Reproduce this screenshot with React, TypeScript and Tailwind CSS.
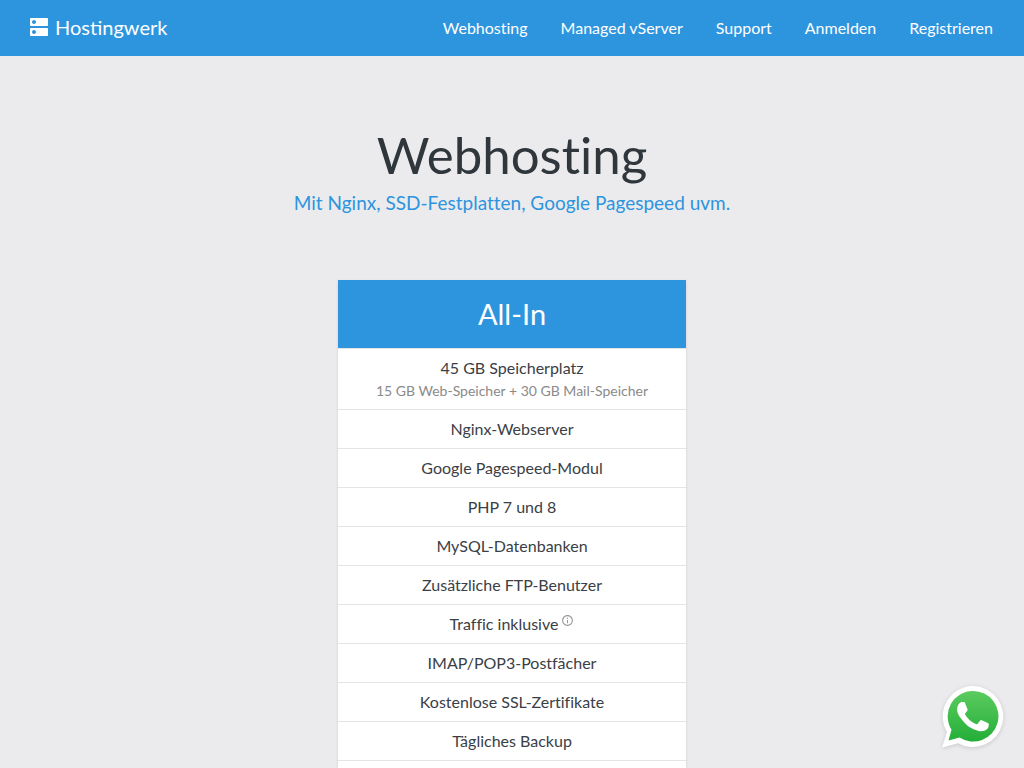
import { MdDns, MdInfoOutline } from "react-icons/md";

type Feature = {
  title: string;
  detail?: string;
  info?: boolean;
};

const navLinks = ["Webhosting", "Managed vServer", "Support", "Anmelden", "Registrieren"];

const features: Feature[] = [
  { title: "45 GB Speicherplatz", detail: "15 GB Web-Speicher + 30 GB Mail-Speicher" },
  { title: "Nginx-Webserver" },
  { title: "Google Pagespeed-Modul" },
  { title: "PHP 7 und 8" },
  { title: "MySQL-Datenbanken" },
  { title: "Zusätzliche FTP-Benutzer" },
  { title: "Traffic inklusive", info: true },
  { title: "IMAP/POP3-Postfächer" },
  { title: "Kostenlose SSL-Zertifikate" },
  { title: "Tägliches Backup" },
];

function Header() {
  return (
    <header className="flex h-14 shrink-0 items-center justify-between bg-[#2d94de] pr-[31px] pl-[27px] text-white">
      <a href="#" className="flex items-center gap-1 pb-[2px] text-xl">
        <MdDns className="size-6" aria-hidden />
        Hostingwerk
      </a>
      <nav className="flex gap-[33px] text-base [font-variant-ligatures:none]">
        {navLinks.map((label) => (
          <a key={label} href="#">
            {label}
          </a>
        ))}
      </nav>
    </header>
  );
}

function PlanCard() {
  return (
    <section className="flex w-full max-w-[348px] flex-1 flex-col bg-white shadow-sm">
      <h2 className="bg-[#2d94de] py-4 text-center text-[29px] leading-9 text-white">All-In</h2>
      <ul className="border-b border-[#e3e4e6] text-center text-base text-[#3a4046]">
        {features.map(({ title, detail, info }) => (
          <li key={title} className="border-t border-[#e3e4e6] py-[7px]">
            <div className="flex justify-center gap-[3px]">
              {title}
              {info && (
                <button type="button" aria-label="Info" className="mt-[2px] self-start text-[13px] text-[#999]">
                  <MdInfoOutline />
                </button>
              )}
            </div>
            {detail && <p className="text-sm leading-[22px] text-[#8a8a8a]">{detail}</p>}
          </li>
        ))}
      </ul>
    </section>
  );
}

function WhatsAppLink() {
  return (
    <a href="#" aria-label="WhatsApp" className="fixed right-5 bottom-5 block size-[62px]">
      <svg viewBox="0 0 62 62" className="size-full overflow-visible drop-shadow-sm">
        <defs>
          <linearGradient id="bubble" x1="0" y1="0" x2="0" y2="1">
            <stop offset="0" stopColor="#5ccb5f" />
            <stop offset="1" stopColor="#23ae38" />
          </linearGradient>
        </defs>
        <path
          d="M31 0a30.500 30.500 0 0 0-26 46L0 61.500l16-4.300A30.500 30.500 0 1 0 31 0z"
          fill="#fff"
        />
        <path
          d="M31 5a25.300 25.300 0 0 0-21.500 38.700L6.500 54.500l11-2.900A25.300 25.300 0 1 0 31 5z"
          fill="url(#bubble)"
        />
        <path
          d="M23.500 17.300c-.6-1.300-1.200-1.400-1.900-1.400h-1.500c-.6 0-1.500.2-2.300 1.100-.8.800-2.700 2.700-2.700 6.500s2.800 7.500 3.200 8c.4.500 5.400 8.600 13.300 11.700 6.600 2.600 7.900 2.100 9.400 1.900 1.400-.1 4.600-1.900 5.300-3.700.6-1.800.6-3.400.4-3.700-.2-.3-.7-.5-1.500-.9s-4.600-2.300-5.400-2.500c-.7-.3-1.200-.4-1.800.4-.5.800-2 2.500-2.500 3-.4.600-.9.600-1.700.2-.8-.4-3.300-1.200-6.300-3.900-2.300-2.100-3.900-4.600-4.300-5.400-.5-.8-.1-1.200.3-1.600.4-.4.800-.9 1.200-1.400.4-.4.500-.8.800-1.300.3-.5.100-1-.1-1.400-.2-.4-1.800-4.300-2.400-5.800z"
          fill="#fff"
        />
      </svg>
    </a>
  );
}

export default function App() {
  return (
    <div className="flex min-h-screen flex-col bg-[#ebebee] font-['Lato',sans-serif] text-[#2f363c]">
      <Header />
      <main className="flex flex-1 flex-col items-center px-4 pt-[67px] [font-variant-ligatures:none]">
        <h1 className="text-center text-[51px] leading-16">Webhosting</h1>
        <p className="mt-1 mb-[65px] text-center text-[19px] leading-6 text-[#2d94de]">
          Mit Nginx, SSD-Festplatten, Google Pagespeed uvm.
        </p>
        <PlanCard />
      </main>
      <WhatsAppLink />
    </div>
  );
}
